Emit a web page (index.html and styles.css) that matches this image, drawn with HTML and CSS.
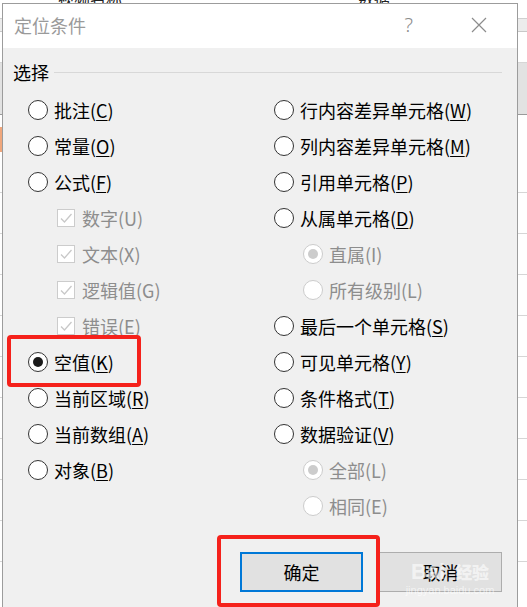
FILE: index.html
```html
<!DOCTYPE html>
<html lang="zh">
<head>
<meta charset="utf-8">
<title>定位条件</title>
<link rel="stylesheet" href="styles.css">
</head>
<body>
<div class="sheet">
  <div class="sheet-head">
    <span class="h-cell h1">视频名称</span>
    <span class="h-cell h2">数据</span>
  </div>
  <div class="sheet-row r-band"></div>
  <div class="sheet-row r-white"></div>
  <div class="sheet-row r-gray"></div>
  <div class="sheet-row r-orange"></div>
  <div class="sheet-row"></div>
  <div class="sheet-row"></div>
  <div class="sheet-row"></div>
  <div class="sheet-row"></div>
  <div class="sheet-row"></div>
  <div class="sheet-row"></div>
  <div class="sheet-row"></div>
  <div class="sheet-row"></div>
  <div class="sheet-row"></div>
  <div class="sheet-row"></div>
</div>

<div class="dialog">
  <div class="titlebar">
    <span class="title">定位条件</span>
    <span class="help">?</span>
    <svg class="close" width="16" height="16" viewBox="0 0 16 16"><path d="M1 1 L15 15 M15 1 L1 15" stroke="#8c8c8c" stroke-width="1.2" fill="none"/></svg>
  </div>
  <div class="body">
    <div class="legend"><span>选择</span><i class="rule"></i></div>
    <div class="cols">
      <div class="col">
        <div class="opt"><span class="radio"></span><span>批注(<u>C</u>)</span></div>
        <div class="opt"><span class="radio"></span><span>常量(<u>O</u>)</span></div>
        <div class="opt"><span class="radio"></span><span>公式(<u>F</u>)</span></div>
        <div class="opt sub dis"><span class="check"><svg width="16" height="16" viewBox="0 0 16 16"><path d="M3 8.5 L6.5 12 L13.5 4" stroke="#c8c8c8" stroke-width="1.3" fill="none"/></svg></span><span>数字(U)</span></div>
        <div class="opt sub dis"><span class="check"><svg width="16" height="16" viewBox="0 0 16 16"><path d="M3 8.5 L6.5 12 L13.5 4" stroke="#c8c8c8" stroke-width="1.3" fill="none"/></svg></span><span>文本(X)</span></div>
        <div class="opt sub dis"><span class="check"><svg width="16" height="16" viewBox="0 0 16 16"><path d="M3 8.5 L6.5 12 L13.5 4" stroke="#c8c8c8" stroke-width="1.3" fill="none"/></svg></span><span>逻辑值(G)</span></div>
        <div class="opt sub dis"><span class="check"><svg width="16" height="16" viewBox="0 0 16 16"><path d="M3 8.5 L6.5 12 L13.5 4" stroke="#c8c8c8" stroke-width="1.3" fill="none"/></svg></span><span>错误(E)</span></div>
        <div class="opt"><span class="radio on"></span><span>空值(<u>K</u>)</span></div>
        <div class="opt"><span class="radio"></span><span>当前区域(<u>R</u>)</span></div>
        <div class="opt"><span class="radio"></span><span>当前数组(<u>A</u>)</span></div>
        <div class="opt"><span class="radio"></span><span>对象(<u>B</u>)</span></div>
      </div>
      <div class="col">
        <div class="opt"><span class="radio"></span><span>行内容差异单元格(<u>W</u>)</span></div>
        <div class="opt"><span class="radio"></span><span>列内容差异单元格(<u>M</u>)</span></div>
        <div class="opt"><span class="radio"></span><span>引用单元格(<u>P</u>)</span></div>
        <div class="opt"><span class="radio"></span><span>从属单元格(<u>D</u>)</span></div>
        <div class="opt sub dis"><span class="radio on"></span><span>直属(I)</span></div>
        <div class="opt sub dis"><span class="radio"></span><span>所有级别(L)</span></div>
        <div class="opt"><span class="radio"></span><span>最后一个单元格(<u>S</u>)</span></div>
        <div class="opt"><span class="radio"></span><span>可见单元格(<u>Y</u>)</span></div>
        <div class="opt"><span class="radio"></span><span>条件格式(<u>T</u>)</span></div>
        <div class="opt"><span class="radio"></span><span>数据验证(<u>V</u>)</span></div>
        <div class="opt sub dis"><span class="radio on"></span><span>全部(L)</span></div>
        <div class="opt sub dis"><span class="radio"></span><span>相同(E)</span></div>
      </div>
    </div>
    <div class="buttons">
      <button class="btn default">确定</button>
      <button class="btn">取消</button>
    </div>
  </div>
</div>

<div class="mark mark-1"></div>
<div class="mark mark-2"></div>
<div class="watermark"><span class="wm-top">Bai<b>经验</b></span><span class="wm-bot">jingyan.baidu.com</span></div>
</body>
</html>
```
FILE: styles.css
```css
html, body {
  margin: 0;
  padding: 0;
  background: #ffffff;
  width: 527px;
  height: 607px;
  overflow: hidden;
  font-family: "Noto Sans CJK SC", "Noto Sans", sans-serif;
}

/* background spreadsheet */
.sheet {
  display: flex;
  flex-direction: column;
}
.sheet-head {
  position: relative;
  height: 18px;
  border-bottom: 1px solid #d0d0d0;
  overflow: hidden;
}
.h-cell {
  position: absolute;
  top: -14px;
  font-size: 16px;
  color: #222;
}
.h1 { left: 58px; }
.h2 { left: 358px; }
.sheet-row {
  height: 40px;
  border-bottom: 1px solid #d6d6d6;
}
.r-band { height: 12px; background: #ececec; border-bottom-color: #c8c8c8; }
.r-white { height: 30px; }
.r-gray { height: 51px; background: #e2e2e2; border-bottom: 1px solid #9a9a9a; }
.r-orange { background: linear-gradient(90deg, #f0a77c 0, #f0a77c 3px, #fff 3px); height: 25px; margin-top: 12px; border-bottom: none; }

/* dialog window */
.dialog {
  position: absolute;
  left: 2px;
  top: 3px;
  width: 516px;
  height: 604px;
  box-sizing: border-box;
  border: 1px solid #9c9c9c;
  border-bottom: none;
  background: #f0f0f0;
  display: flex;
  flex-direction: column;
  overflow: hidden;
}
.titlebar {
  height: 44px;
  box-sizing: border-box;
  padding: 0 0 3px 11px;
  background: #ffffff;
  display: flex;
  align-items: center;
  flex: none;
}
.title {
  font-size: 18px;
  color: #9a9a9a;
  flex: 1;
}
.help {
  font-size: 20px;
  color: #8c8c8c;
  margin-right: 58px;
  font-family: "Noto Sans", sans-serif;
  font-weight: 300;
}
.close {
  margin-right: 30px;
}

.body {
  padding: 12px 15px 0 10px;
  display: flex;
  flex-direction: column;
}
.legend {
  display: flex;
  align-items: center;
  height: 24px;
  font-size: 18px;
  color: #000;
}
.rule {
  flex: 1;
  height: 1px;
  background: #d8d8d8;
  margin-left: 5px;
}

.cols {
  display: grid;
  grid-template-columns: 246px 1fr;
  margin: 8px 0 0 15px;
}
.col {
  display: flex;
  flex-direction: column;
}
.opt {
  height: 36px;
  display: flex;
  align-items: center;
  font-size: 18px;
  color: #000;
  white-space: nowrap;
}
.opt u {
  text-underline-offset: 2px;
  text-decoration-thickness: 1px;
}
.opt.sub { padding-left: 29px; }
.opt.dis { color: #8d8d8d; }

.radio {
  width: 20px;
  height: 20px;
  box-sizing: border-box;
  border: 1.5px solid #333;
  border-radius: 50%;
  background: #fff;
  margin-right: 6px;
  display: flex;
  align-items: center;
  justify-content: center;
  flex: none;
}
.radio.on::after {
  content: "";
  width: 10px;
  height: 10px;
  border-radius: 50%;
  background: #1a1a1a;
}
.dis .radio { border-color: #cccccc; }
.dis .radio.on::after { background: #cccccc; }

.check {
  width: 18px;
  height: 18px;
  box-sizing: border-box;
  border: 1px solid #cccccc;
  background: #fff;
  margin-right: 7px;
  display: flex;
  align-items: center;
  justify-content: center;
  flex: none;
}

.buttons {
  display: flex;
  justify-content: flex-end;
  gap: 16px;
  margin-top: 28px;
}
.btn {
  width: 123px;
  height: 40px;
  box-sizing: border-box;
  background: #e1e1e1;
  border: 1px solid #adadad;
  font-family: "Noto Sans CJK SC", sans-serif;
  font-size: 18px;
  color: #000;
  padding: 0;
}
.btn.default {
  border: 2px solid #0078d7;
}

/* red annotation boxes */
.mark {
  position: absolute;
  box-sizing: border-box;
  border: 4px solid #f5211b;
  border-radius: 4px;
}
.mark-1 { left: 7px; top: 335px; width: 134px; height: 52px; }
.mark-2 { left: 217px; top: 535px; width: 163px; height: 72px; }

/* watermark */
.watermark {
  position: absolute;
  left: 400px;
  top: 560px;
  width: 100px;
  display: flex;
  flex-direction: column;
  align-items: center;
  color: rgba(255, 255, 255, 0.6);
  pointer-events: none;
}
.wm-top {
  font-family: "Liberation Sans", sans-serif;
  font-weight: bold;
  font-size: 22px;
  line-height: 24px;
}
.wm-top b {
  font-family: "Noto Sans CJK SC", sans-serif;
  font-size: 17px;
  margin-left: 10px;
}
.wm-bot {
  font-family: "Liberation Sans", sans-serif;
  font-size: 11px;
  line-height: 13px;
}
```
